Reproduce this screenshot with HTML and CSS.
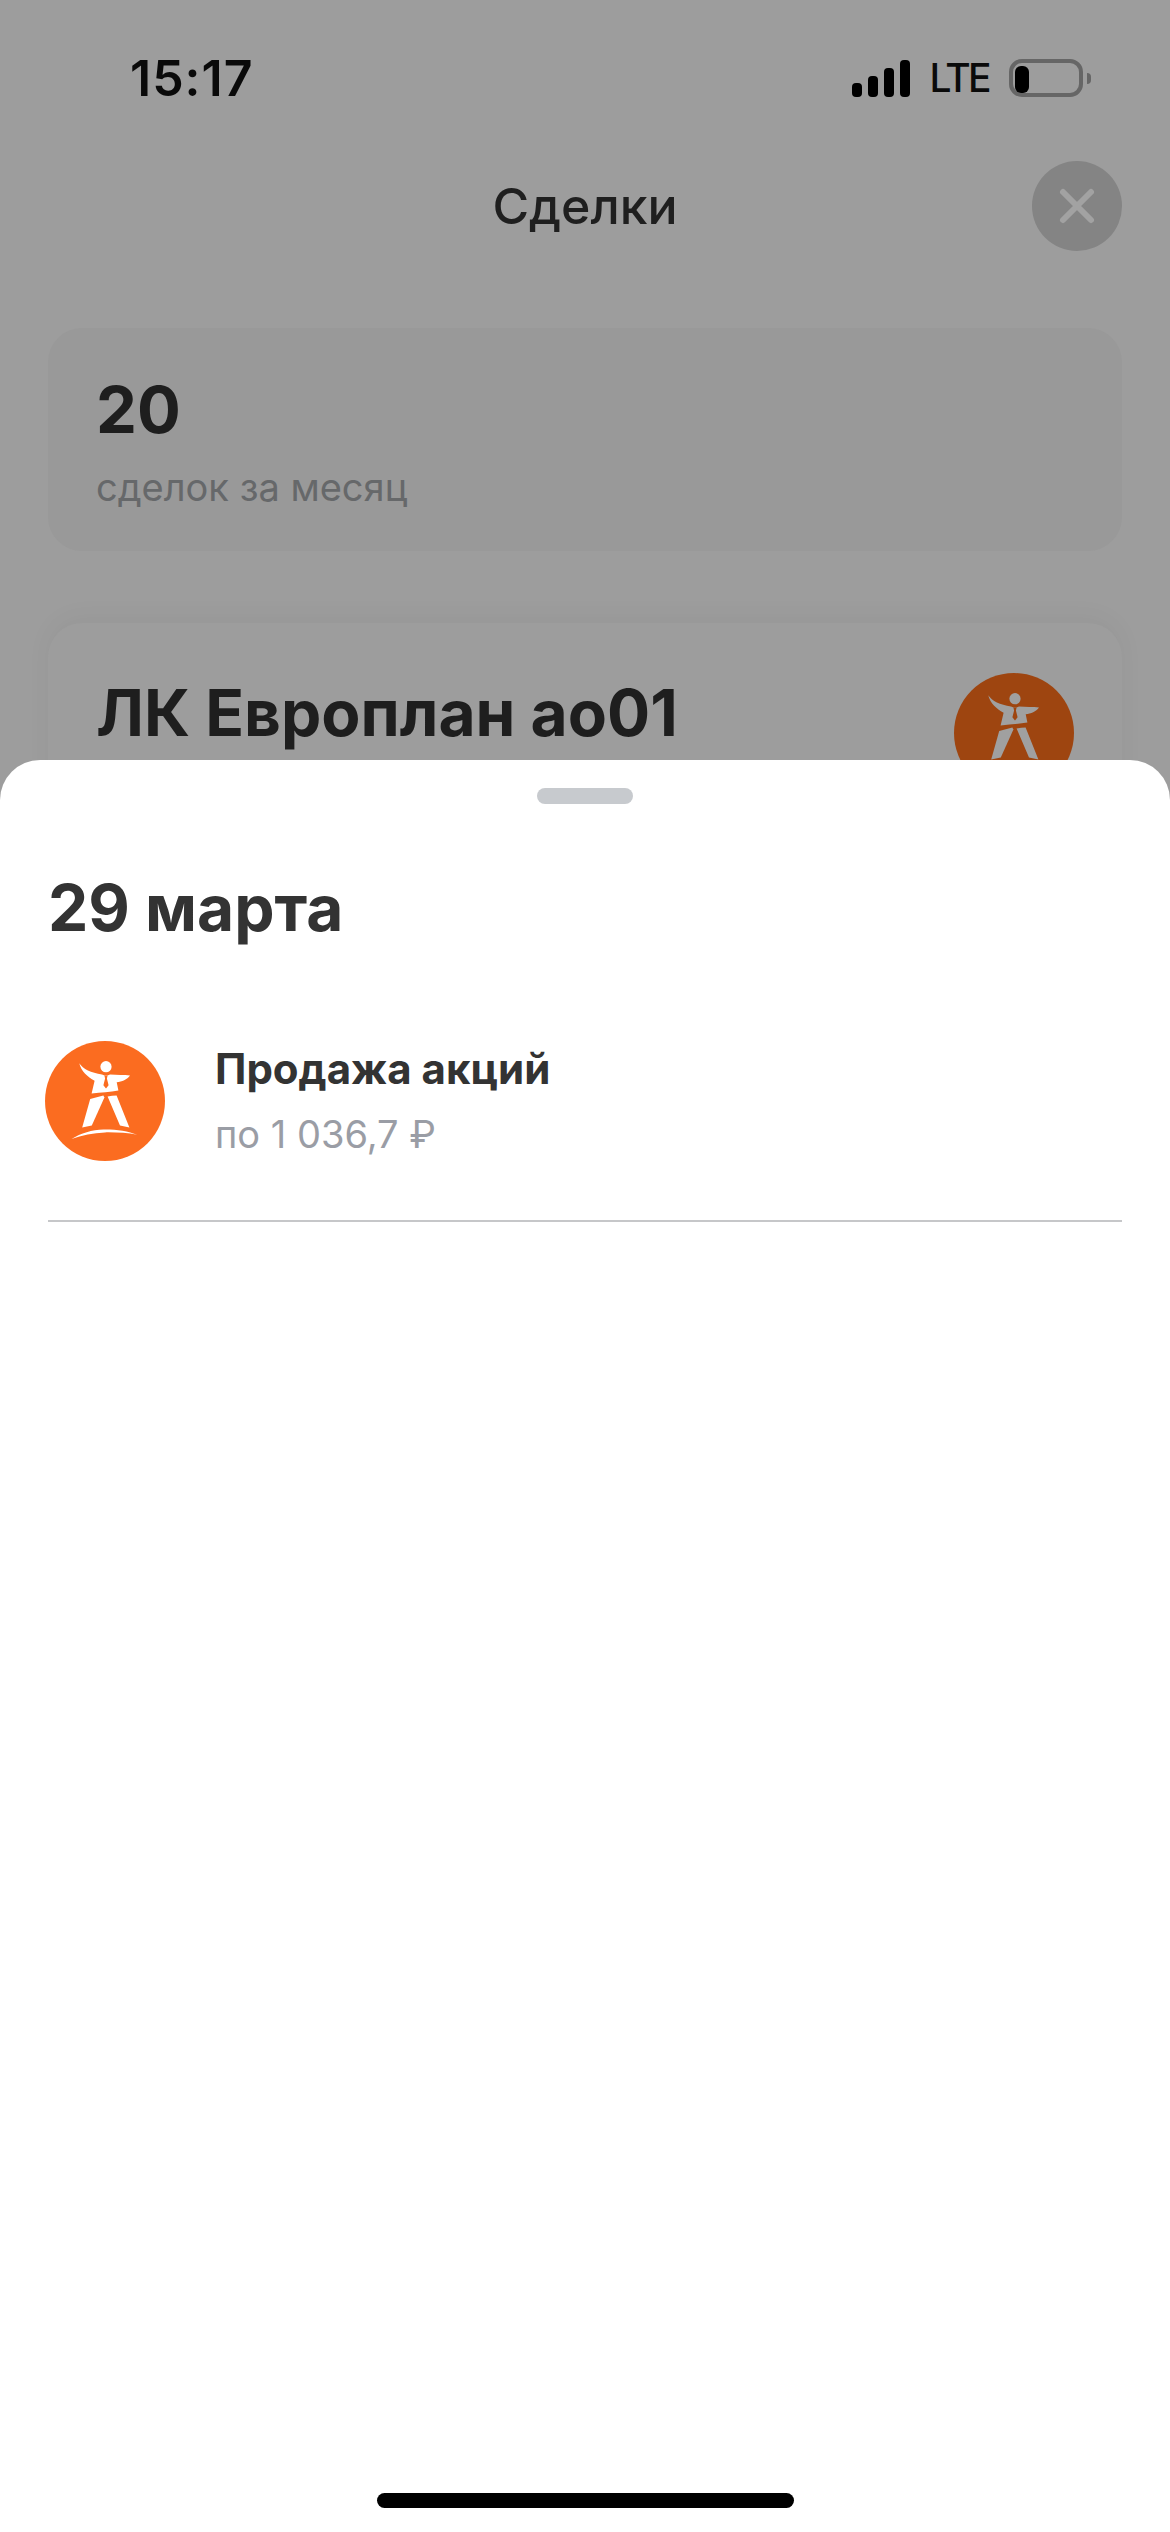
FILE: index.html
```html
<!DOCTYPE html>
<html lang="ru">
<head>
<meta charset="utf-8">
<title>Сделки</title>
<link rel="stylesheet" href="styles.css">
</head>
<body>
<svg class="defs" width="0" height="0" aria-hidden="true">
  <symbol id="logo" viewBox="0 0 120 120">
    <circle class="logo-disc" cx="60" cy="60" r="60"/>
    <g class="logo-figure">
      <circle cx="61" cy="25.7" r="5.6"/>
      <path d="M34.3 22.3C38 28 46 32 57 33.5L59.5 34.6H62.5L65 33.6C72 33.8 79 34.2 85 34.4C82 38.6 77 40.6 71.7 41.2L73.4 49.6C65 51 56 51.6 46.6 52.4L49.6 39.8C42.5 36 36 30 34.3 22.3Z"/>
      <path d="M45.2 58C49.5 56.8 54 55.6 58.4 54.6L59.4 56.6L46.8 84.4L37.2 86.6Z"/>
      <path d="M62.6 55.4C65.5 55 68.8 54.8 71.6 54.6L84.4 86.4L75 84.6Z"/>
      <path d="M26.5 98C36 92 47 88.6 58.5 88.4C71 88.2 83 90 92.5 93.8C82 92 71 91.2 60 91.4C48 91.8 37 94 26.5 98Z"/>
    </g>
    <path class="logo-tie" d="M59.4 34.6H62.6L61.9 37.4L63.6 44.2L61 47.4L58.4 44.2L60.1 37.4Z"/>
  </symbol>
</svg>

<main class="screen">
  <header class="status">
    <span class="clock">15:17</span>
    <div class="status-right">
      <div class="signal">
        <i class="bar bar-1"></i><i class="bar bar-2"></i><i class="bar bar-3"></i><i class="bar bar-4"></i>
      </div>
      <span class="net">LTE</span>
      <div class="battery"><i class="battery-level"></i></div>
      <i class="battery-nub"></i>
    </div>
  </header>

  <div class="nav">
    <h1 class="nav-title">Сделки</h1>
    <button class="close" aria-label="Закрыть">
      <svg width="38" height="38" viewBox="0 0 38 38"><path d="M5 5L33 33M33 5L5 33"/></svg>
    </button>
  </div>

  <section class="card stat">
    <div class="stat-num">20</div>
    <div class="stat-label">сделок за месяц</div>
  </section>

  <section class="card company">
    <h2 class="company-name">ЛК Европлан ао01</h2>
    <svg class="logo logo-dim"><use href="#logo"/></svg>
  </section>
</main>

<aside class="sheet">
  <div class="handle"></div>
  <h2 class="sheet-title">29 марта</h2>
  <div class="deal">
    <svg class="logo logo-live"><use href="#logo"/></svg>
    <div class="deal-text">
      <div class="deal-name">Продажа акций</div>
      <div class="deal-price">по 1 036,7 ₽</div>
    </div>
  </div>
  <hr class="divider">
  <div class="home-bar"></div>
</aside>
</body>
</html>
```

FILE: styles.css
```css
* { box-sizing: border-box; }
html, body { margin: 0; padding: 0; }
body {
  width: 1170px;
  height: 2532px;
  overflow: hidden;
  position: relative;
  background: #9d9d9d;
  font-family: Inter, "Noto Sans", sans-serif;
}
.defs { position: absolute; }

.screen { padding: 59px 48px 0; }

.status {
  display: flex;
  justify-content: space-between;
  align-items: center;
  height: 38px;
  padding-left: 82px;
}
.clock {
  font-size: 50px;
  font-weight: 600;
  line-height: 38px;
  color: #0a0a0a;
  letter-spacing: 1px;
}
.status-right { display: flex; align-items: center; margin-right: 31px; }
.signal { display: flex; align-items: flex-end; gap: 6px; height: 37px; margin-top: 1px; }
.bar { display: block; width: 10px; background: #000; border-radius: 4px; }
.bar-1 { height: 14px; }
.bar-2 { height: 21px; }
.bar-3 { height: 29px; }
.bar-4 { height: 37px; }
.net {
  margin-left: 19px;
  font-size: 39px;
  line-height: 38px;
  font-weight: 500;
  color: #0a0a0a;
  letter-spacing: -2.6px;
}
.battery {
  margin-left: 20px;
  width: 74px;
  height: 38px;
  border: 4px solid #666;
  border-radius: 13px;
  padding: 3px 2px;
}
.battery-level { display: block; width: 14px; height: 27px; background: #000; border-radius: 6px; }
.battery-nub {
  display: block;
  margin-left: 4px;
  width: 4px;
  height: 11px;
  background: #666;
  border-radius: 0 4px 4px 0;
}

.nav {
  display: flex;
  justify-content: center;
  align-items: center;
  position: relative;
  margin-top: 64px;
  height: 90px;
}
.nav-title {
  margin: 0;
  font-size: 50px;
  font-weight: 500;
  line-height: 60px;
  color: #1f1f1f;
}
.close {
  position: absolute;
  right: 0;
  top: 0;
  width: 90px;
  height: 90px;
  padding: 0;
  border: 0;
  border-radius: 50%;
  background: #848484;
  display: flex;
  align-items: center;
  justify-content: center;
}
.close path { stroke: #a2a2a2; stroke-width: 6; stroke-linecap: round; fill: none; }

.card { border-radius: 34px; }
.stat {
  margin-top: 77px;
  height: 223px;
  padding: 49px 48px 0;
  background: #999;
}
.stat-num {
  font-size: 65px;
  font-weight: 700;
  line-height: 66px;
  color: #1e1e1e;
}
.stat-label {
  margin-top: 21px;
  font-size: 38px;
  line-height: 46px;
  color: #66686a;
}
.company {
  margin-top: 72px;
  height: 300px;
  padding: 50px 48px 0 48px;
  background: #9d9d9d;
  box-shadow: 0 -6px 26px rgba(0, 0, 0, .04);
  display: flex;
  justify-content: space-between;
  align-items: flex-start;
}
.company-name {
  margin: 5px 0 0;
  font-size: 64px;
  font-weight: 700;
  line-height: 70px;
  color: #1e1e1e;
}
.logo { display: block; width: 120px; height: 120px; flex: none; }
.logo-live { --disc: #fb6c20; --fig: #fff; --tie: #fb6c20; }
.logo-dim { --disc: #9e4510; --fig: #a0a0a0; --tie: #9e4510; }
.logo-disc { fill: var(--disc); }
.logo-figure { fill: var(--fig); }
.logo-tie { fill: var(--tie); }

.sheet {
  position: absolute;
  left: 0;
  right: 0;
  top: 760px;
  bottom: 0;
  background: #fff;
  border-radius: 40px 40px 0 0;
  padding: 28px 48px 0;
}
.handle {
  width: 96px;
  height: 16px;
  margin: 0 auto;
  border-radius: 8px;
  background: #c7cace;
}
.sheet-title {
  margin: 64px 0 0;
  font-size: 64px;
  font-weight: 700;
  line-height: 80px;
  color: #333;
}
.deal {
  display: flex;
  align-items: flex-start;
  margin: 93px 0 0 -3px;
}
.deal-text { margin-left: 50px; }
.deal-name {
  margin-top: 3px;
  font-size: 42px;
  font-weight: 700;
  line-height: 50px;
  color: #333;
}
.deal-price {
  margin-top: 17px;
  font-size: 38px;
  line-height: 46px;
  color: #9a9da5;
}
.divider {
  margin: 59px 0 0;
  height: 2px;
  border: 0;
  background: #c6c7c9;
}
.home-bar {
  position: absolute;
  left: 377px;
  bottom: 24px;
  width: 417px;
  height: 15px;
  border-radius: 8px;
  background: #000;
}
```
